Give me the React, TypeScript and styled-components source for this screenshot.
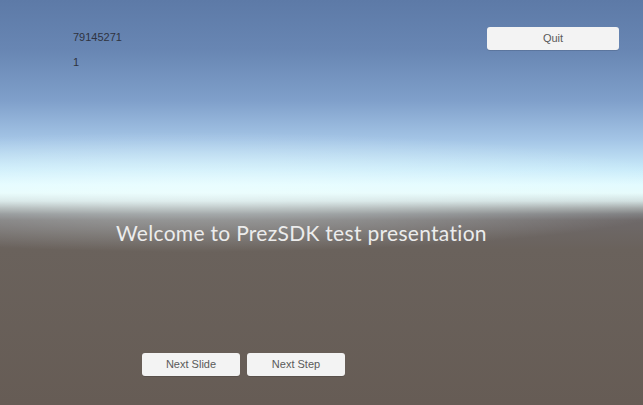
import React from "react";
import styled, { createGlobalStyle } from "styled-components";

const Global = createGlobalStyle`
  html, body { margin: 0; padding: 0; overflow: hidden; }
  body { width: 643px; height: 405px; }
`;

const Scene = styled.div`
  position: relative;
  width: 643px;
  height: 405px;
  display: flex;
  flex-direction: column;
  overflow: hidden;
  font-family: "Liberation Sans", Arial, sans-serif;
  background:
    radial-gradient(ellipse 520px 60px at 30% 192px, rgba(240,255,255,0.55), rgba(240,255,255,0) 100%),
    linear-gradient(
      to bottom,
      #5d7aa7 0px,
      #6886b3 50px,
      #7f9fca 100px,
      #a4c5e6 140px,
      #c9ebfa 170px,
      #e2fbff 185px,
      #e6fbfb 193px,
      #cfdede 201px,
      #a0a5a5 208px,
      #7c7c7e 214px,
      #6e6969 220px,
      #6a625c 250px,
      #665c55 405px
    );
`;

const TopBar = styled.div`
  display: flex;
  justify-content: space-between;
  align-items: flex-start;
  padding: 27px 24px 0 73px;
`;

const Counters = styled.div`
  display: flex;
  flex-direction: column;
  gap: 12px;
  margin-top: 4px;
`;

const Counter = styled.div`
  font-size: 11px;
  line-height: 13px;
  color: #2f3340;
`;

const UiButton = styled.button<{ $w: number }>`
  width: ${(p) => p.$w}px;
  height: 23px;
  padding: 0;
  border: none;
  border-radius: 3px;
  background: #f3f3f3;
  box-shadow: 0 1px 0 rgba(0, 0, 0, 0.12);
  color: #5a5a5a;
  font-family: "Liberation Sans", Arial, sans-serif;
  font-size: 11px;
  line-height: 23px;
  text-align: center;
`;

const Title = styled.h1`
  margin: 150px 0 0 116px;
  font-family: Lato, "Open Sans", sans-serif;
  font-weight: 400;
  font-size: 21px;
  line-height: 28px;
  color: #ececec;
  letter-spacing: 0.3px;
  white-space: nowrap;
`;

const ButtonRow = styled.div`
  display: flex;
  gap: 7px;
  margin: 106px 0 0 142px;
`;

export default function App() {
  return (
    <>
      <Global />
      <Scene>
        <TopBar>
          <Counters>
            <Counter>79145271</Counter>
            <Counter>1</Counter>
          </Counters>
          <UiButton $w={132}>Quit</UiButton>
        </TopBar>
        <Title>Welcome to PrezSDK test presentation</Title>
        <ButtonRow>
          <UiButton $w={98}>Next Slide</UiButton>
          <UiButton $w={98}>Next Step</UiButton>
        </ButtonRow>
      </Scene>
    </>
  );
}
